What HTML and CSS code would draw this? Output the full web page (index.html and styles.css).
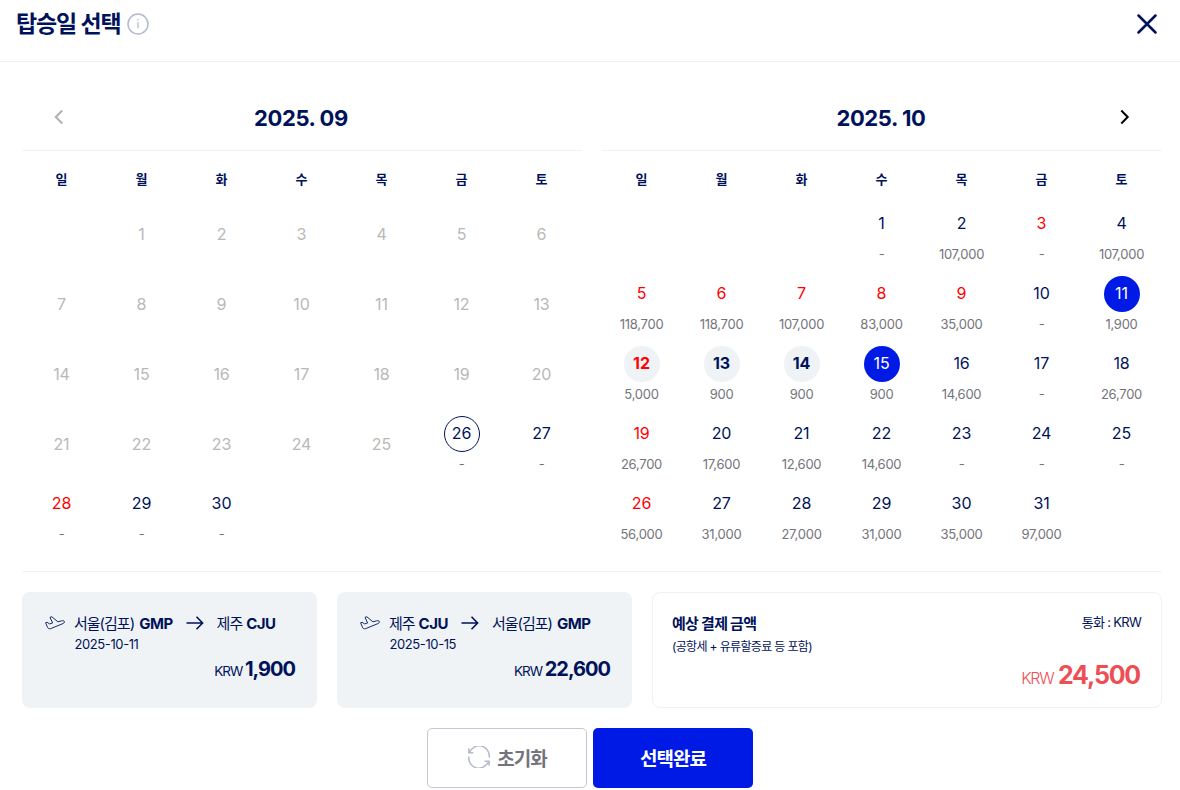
FILE: index.html
```html
<!DOCTYPE html>
<html lang="ko">
<head>
    <meta charset="UTF-8">
    <meta name="viewport" content="width=device-width, initial-scale=1.0">
    <title>탑승일 선택</title>
    <link rel="stylesheet" href="styles.css">
</head>
<body>
    <header class="header">
        <h1>탑승일 선택</h1>
        <svg class="info" width="22" height="22" viewBox="0 0 22 22" fill="none" stroke="#b4bacb">
            <circle cx="11" cy="11" r="10" stroke-width="1.5"/>
            <path d="M11 9.2v6M11 6v1.5" stroke-width="1.3"/>
        </svg>
        <button class="close" aria-label="닫기">
            <svg width="20" height="20" viewBox="0 0 20 20" fill="none" stroke="#00125a" stroke-width="2.5" stroke-linecap="round">
                <path d="M1.5 1.5l17 17M18.5 1.5l-17 17"/>
            </svg>
        </button>
    </header>

    <main class="content">
        <div class="calendars">
            <section class="calendar">
                <div class="month">
                    <button class="arrow prev" aria-label="이전 달">
                        <svg width="10" height="16" viewBox="0 0 10 16" fill="none" stroke="#b0b0b0" stroke-width="2"><path d="M8.2 1.5L1.8 8l6.4 6.5"/></svg>
                    </button>
                    <h2>2025. 09</h2>
                </div>
                <div class="week"></div>
                <div class="days" id="month-9"></div>
            </section>
            <section class="calendar">
                <div class="month">
                    <h2>2025. 10</h2>
                    <button class="arrow next" aria-label="다음 달">
                        <svg width="10" height="16" viewBox="0 0 10 16" fill="none" stroke="#000" stroke-width="2"><path d="M1.3 1.5L7.7 8l-6.400 6.5"/></svg>
                    </button>
                </div>
                <div class="week"></div>
                <div class="days" id="month-10"></div>
            </section>
        </div>

        <div class="summary">
            <div class="card trip">
                <div class="route">
                    <svg class="plane" width="20" height="14" viewBox="0 0 20 14"><use href="#plane"/></svg>
                    <span class="city long">서울(김포)</span><b>GMP</b>
                    <svg class="to" width="18" height="14" viewBox="0 0 18 14"><use href="#to"/></svg>
                    <span class="city">제주</span><b>CJU</b>
                </div>
                <div class="date">2025-10-11</div>
                <div class="fare">KRW <b>1,900</b></div>
            </div>
            <div class="card trip">
                <div class="route">
                    <svg class="plane" width="20" height="14" viewBox="0 0 20 14"><use href="#plane"/></svg>
                    <span class="city">제주</span><b>CJU</b>
                    <svg class="to" width="18" height="14" viewBox="0 0 18 14"><use href="#to"/></svg>
                    <span class="city long">서울(김포)</span><b>GMP</b>
                </div>
                <div class="date">2025-10-15</div>
                <div class="fare">KRW <b>22,600</b></div>
            </div>
            <div class="card total">
                <div class="total-head">
                    <h3>예상 결제 금액</h3>
                    <span class="currency">통화 : KRW</span>
                </div>
                <p class="note">(공항세 + 유류할증료 등 포함)</p>
                <div class="fare">KRW <b>24,500</b></div>
            </div>
        </div>

        <div class="buttons">
            <button class="btn reset">
                <svg width="22" height="22" viewBox="0 0 22 22" fill="none" stroke="#b4bacb" stroke-width="1.5">
                    <path d="M1.5 6.600A10.200 10.200 0 0 1 21.200 11.500M.8 10.500A10.200 10.200 0 0 0 20.500 15.400M.8 2.300v4.500h4.500M16.500 15.200h4.600v4.500"/>
                </svg>
                <span>초기화</span>
            </button>
            <button class="btn done">선택완료</button>
        </div>
    </main>

    <svg width="0" height="0" class="defs">
        <symbol id="plane" viewBox="0 0 20 14">
            <path d="M.6 6.800l1.500-.5 2.500 1.600 3-.9L5 1.300 6.900.8l6 5 3.500-.9c1.700-.4 2.800-.2 3 .7s-.7 1.900-2.200 2.300L5.500 12.700c-1.200.3-2.300-.1-2.900-1.200z" fill="none" stroke="#00125a" stroke-width=".9" stroke-linejoin="round"/>
        </symbol>
        <symbol id="to" viewBox="0 0 18 14">
            <path d="M.5 7h16M10.500.8L16.600 7l-6.100 6.200" fill="none" stroke="#00125a" stroke-width="1.600"/>
        </symbol>
    </svg>

    <script>
        const weekdays = ['일', '월', '화', '수', '목', '금', '토'];
        const prices = {
            2: '107,000', 4: '107,000', 5: '118,700', 6: '118,700', 7: '107,000', 8: '83,000', 9: '35,000',
            11: '1,900', 12: '5,000', 13: '900', 14: '900', 15: '900', 16: '14,600', 18: '26,700',
            19: '26,700', 20: '17,600', 21: '12,600', 22: '14,600', 26: '56,000', 27: '31,000',
            28: '27,000', 29: '31,000', 30: '35,000', 31: '97,000'
        };

        document.querySelectorAll('.week').forEach(week => {
            week.innerHTML = weekdays.map(day => `<span>${day}</span>`).join('');
        });

        // start: weekday of the 1st, getClass: extra class for a day
        function drawMonth(id, start, count, fares, getClass) {
            let html = '<div></div>'.repeat(start);
            for (let day = 1; day <= count; day++) {
                const name = getClass(day);
                const fare = name.includes('past') ? '' : `<span class="price">${fares[day] || '-'}</span>`;
                html += `<div class="day ${name}"><span class="num">${day}</span>${fare}</div>`;
            }
            document.getElementById(id).innerHTML = html;
        }

        drawMonth('month-9', 1, 30, {}, day => {
            if (day < 26) return 'past';
            if (day === 26) return 'today';
            return day === 28 ? 'holiday' : '';
        });

        drawMonth('month-10', 3, 31, prices, day => {
            const holiday = [3, 5, 6, 7, 8, 9, 12, 19, 26].includes(day) ? 'holiday' : '';
            if (day === 11 || day === 15) return 'selected';
            return day > 11 && day < 15 ? 'range ' + holiday : holiday;
        });
    </script>
</body>
</html>
```
FILE: styles.css
```css
* {
    box-sizing: border-box;
}
body {
    margin: 0;
    height: 790px;
    overflow: hidden;
    background-color: #fff;
    color: #00125a;
    font-family: Inter, "Noto Sans CJK KR", sans-serif;
}
h1, h2, h3, p {
    margin: 0;
}
button {
    padding: 0;
    border: 0;
    background: none;
    font-family: inherit;
    cursor: pointer;
}
svg {
    display: block;
    flex: none;
}
.defs {
    position: absolute;
}
.header {
    display: flex;
    align-items: center;
    height: 62px;
    padding: 0 23px 14px 16px;
    border-bottom: 1px solid #f2f2f2;
}
h1 {
    font-size: 23px;
    line-height: 30px;
    letter-spacing: -1.1px;
}
.info {
    margin-left: 6px;
}
.close {
    margin-left: auto;
}
.content {
    padding: 0 18px 0 22px;
}
.calendars {
    display: flex;
    gap: 20px;
    height: 510px;
    padding-top: 24px;
    border-bottom: 1px solid #f2f2f2;
}
.calendar {
    width: 560px;
}
.month {
    display: flex;
    align-items: center;
    height: 65px;
    padding: 0 32px;
    border-bottom: 1px solid #f2f2f2;
}
.month h2 {
    flex: 1;
    padding-right: 2px;
    font-size: 22px;
    line-height: 30px;
    text-align: center;
    letter-spacing: -0.4px;
}
.arrow {
    padding-bottom: 2px;
}
.prev {
    margin-right: -10px;
}
.next {
    margin-left: -10px;
}
.week, .days {
    display: grid;
    grid-template-columns: repeat(7, 80px);
    text-align: center;
}
.week {
    height: 54px;
    padding-top: 18px;
    font-size: 13px;
    font-weight: 700;
    line-height: 20px;
}
.week span {
    padding-right: 1px;
}
.days {
    grid-auto-rows: 70px;
}
.day {
    display: flex;
    flex-direction: column;
    align-items: center;
    padding-top: 1px;
}
.num {
    width: 36px;
    height: 36px;
    padding-right: 1px;
    border-radius: 50%;
    font-size: 16px;
    line-height: 35px;
    letter-spacing: -0.1px;
}
.price {
    padding-right: 1px;
    margin-top: 2px;
    color: #74747c;
    font-size: 13px;
    line-height: 20px;
    letter-spacing: -0.25px;
}
.past {
    padding-top: 12px;
    color: #b8b8b8;
}
.holiday {
    color: #f00;
}
.today .num {
    border: 1px solid #00125a;
    line-height: 33px;
}
.range .num {
    background-color: #eff3f6;
    font-weight: 700;
}
.selected .num {
    background-color: #001ae6;
    color: #fff;
}
.summary {
    display: flex;
    gap: 20px;
    margin-top: 20px;
}
.card {
    height: 116px;
    border-radius: 8px;
}
.trip {
    width: 295px;
    padding: 20px 22px 0 23px;
    background-color: #eff3f6;
}
.route {
    display: flex;
    align-items: center;
    height: 22px;
    font-size: 15px;
}
.route b {
    margin-left: 4px;
    letter-spacing: -0.5px;
}
.city {
    padding-bottom: 2px;
    letter-spacing: -1px;
}
.long + b {
    margin-left: 5px;
}
.plane {
    margin-right: 9px;
}
.to {
    margin: 0 13px;
}
.date {
    margin-left: 29.5px;
    font-size: 13px;
    line-height: 20px;
    letter-spacing: -0.4px;
}
.fare {
    text-align: right;
    font-size: 13.5px;
    line-height: 30px;
    letter-spacing: -1px;
}
.fare b {
    font-size: 20px;
    font-weight: 700;
}
.total {
    width: 510px;
    padding: 20px 20px 0 19px;
    border: 1px solid #f2f2f2;
}
.total-head {
    display: flex;
    justify-content: space-between;
    height: 22px;
    line-height: 22px;
}
.total h3 {
    font-size: 15px;
    letter-spacing: -0.7px;
}
.currency {
    margin-top: -2px;
    font-size: 13px;
    letter-spacing: -0.7px;
}
.note {
    font-size: 12px;
    line-height: 24px;
    letter-spacing: -0.65px;
}
.total .fare {
    padding-right: 1px;
    color: #ed4f55;
    font-size: 16px;
    font-weight: 300;
    line-height: 32px;
    letter-spacing: -1.2px;
}
.total .fare b {
    margin-left: 1px;
    font-size: 25px;
}
.buttons {
    display: flex;
    justify-content: center;
    gap: 6px;
    margin: 20px 4px 0 0;
}
.btn {
    display: flex;
    align-items: center;
    justify-content: center;
    width: 160px;
    height: 60px;
    padding-bottom: 2px;
    border-radius: 5px;
    font-size: 19px;
    font-weight: 700;
    letter-spacing: -1px;
}
.reset {
    gap: 7px;
    padding-left: 1px;
    border: 1px solid #c3c8d4;
    color: #74747c;
}
.done {
    background-color: #001ae6;
    color: #fff;
}
```
